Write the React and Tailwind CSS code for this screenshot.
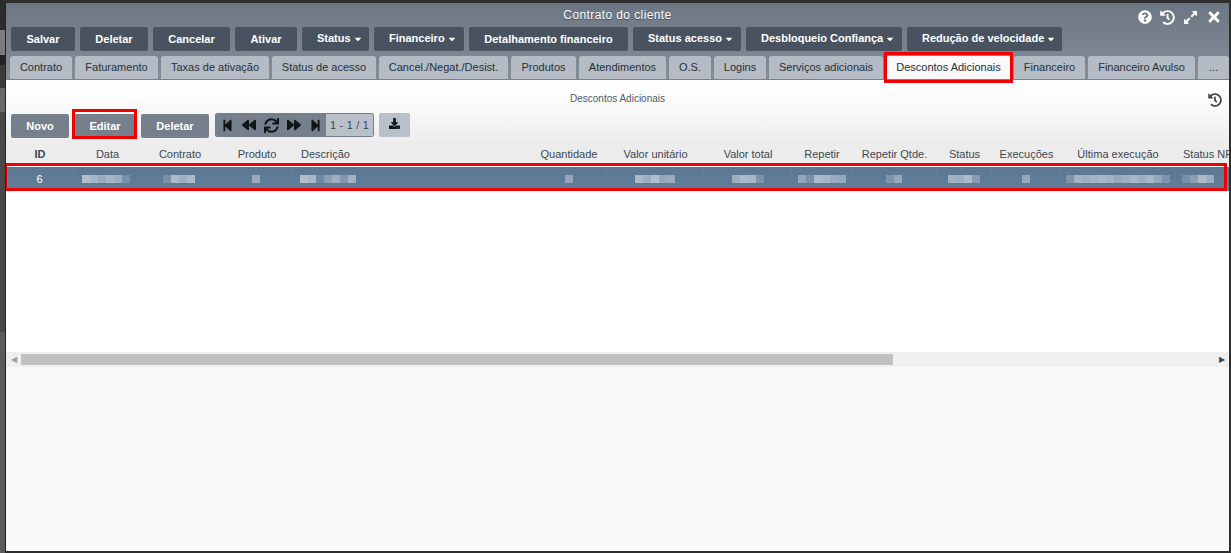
import { FaQuestionCircle, FaHistory, FaExpandAlt, FaTimes, FaStepBackward, FaBackward, FaSync, FaForward, FaStepForward, FaDownload, FaCaretDown } from 'react-icons/fa';

const actions = [
  { label: 'Salvar', w: 'w-[64px]' },
  { label: 'Deletar', w: 'w-[68px]' },
  { label: 'Cancelar', w: 'w-[77px]' },
  { label: 'Ativar', w: 'w-[62px]' },
  { label: 'Status', w: 'w-[67px]', menu: true },
  { label: 'Financeiro', w: 'w-[90px]', menu: true },
  { label: 'Detalhamento financeiro', w: 'w-[159px]' },
  { label: 'Status acesso', w: 'w-[108px]', menu: true },
  { label: 'Desbloqueio Confiança', w: 'w-[156px]', menu: true },
  { label: 'Redução de velocidade', w: 'w-[155px]', menu: true },
];

const tabs = [
  { label: 'Contrato', w: 'w-[62px]' },
  { label: 'Faturamento', w: 'w-[83px]' },
  { label: 'Taxas de ativação', w: 'w-[108px]' },
  { label: 'Status de acesso', w: 'w-[104px]' },
  { label: 'Cancel./Negat./Desist.', w: 'w-[129px]' },
  { label: 'Produtos', w: 'w-[65px]' },
  { label: 'Atendimentos', w: 'w-[87px]' },
  { label: 'O.S.', w: 'w-[42px]' },
  { label: 'Logins', w: 'w-[52px]' },
  { label: 'Serviços adicionais', w: 'w-[114px]' },
  { label: 'Descontos Adicionais', w: 'w-[125px]', active: true },
  { label: 'Financeiro', w: 'w-[71px]' },
  { label: 'Financeiro Avulso', w: 'w-[107px]' },
  { label: '...', w: 'w-[31px]' },
];

// blurred cells of the selected row, one value per 8px block
const columns = [
  { label: 'ID', w: 'w-[68px]', bold: true, text: '6' },
  { label: 'Data', w: 'w-[65px]', nudge: true, blur: [0.9, 0.8, 0.65, 0.8, 0.7, 0.3] },
  { label: 'Contrato', w: 'w-[80px]', nudge: true, blur: [0.3, 0.85, 0.7, 0.85] },
  { label: 'Produto', w: 'w-[74px]', nudge: true, blur: [0.65] },
  { label: 'Descrição', w: 'w-[238px]', left: true, blur: [0.9, 0.8, 0.2, 0.5, 0.7, 0.4, 0.75] },
  { label: 'Quantidade', w: 'w-[76px]', blur: [0.6] },
  { label: 'Valor unitário', w: 'w-[97px]', blur: [0.85, 0.7, 0.9, 0.6, 0.65] },
  { label: 'Valor total', w: 'w-[88px]', blur: [0.7, 0.85, 0.8, 0.35] },
  { label: 'Repetir', w: 'w-[60px]', blur: [0.6, 0.3, 0.85, 0.8, 0.65, 0.6] },
  { label: 'Repetir Qtde.', w: 'w-[85px]', blur: [0.35, 0.6] },
  { label: 'Status', w: 'w-[55px]', blur: [0.75, 0.7, 0.85, 0.45] },
  { label: 'Execuções', w: 'w-[69px]', blur: [0.6] },
  { label: 'Última execução', w: 'w-[114px]', blur: [0.35, 0.75, 0.7, 0.75, 0.8, 0.75, 0.6, 0.7, 0.8, 0.7, 0.8, 0.6, 0.35] },
  { label: 'Status NFE', w: 'w-[65px]', left: true, blur: [0.3, 0.5, 0.85, 0.7] },
];

// what shows of the page behind the window, on its left
const backdrop = [
  'h-[30px] bg-[#2c2c2c]',
  'h-[25px] bg-[#7c7c7c]',
  'h-[10px] bg-[#222222]',
  'h-[23px] bg-[#3a3a3a]',
  'h-[24px] bg-[#6a6a6a]',
  'h-[220px] bg-[#484848]',
  'h-[221px] bg-[#5c5c5c]',
];

function Blur({ cells }) {
  return (
    <div className="flex h-[8px]">
      {cells.map((o, i) => (
        <span key={i} className="w-[8px] h-full bg-[#b9c5d4]" style={{ opacity: o }} />
      ))}
    </div>
  );
}

function SubButton({ children, w }) {
  return (
    <button className={`${w} h-[24px] rounded-[2px] bg-[#75808c] text-white text-[11px] font-bold flex items-center justify-center`}>
      {children}
    </button>
  );
}

export default function App() {
  return (
    <div className="w-[1231px] h-[553px] overflow-hidden bg-[#2e2e2e] flex font-['Liberation_Sans',Arial,sans-serif]">
      <div className="w-[5px] shrink-0 flex flex-col">
        {backdrop.map(b => <div key={b} className={b} />)}
      </div>
      <div className="w-[1224px] h-[548px] mt-[3px] shrink-0 border-l border-[#222222] flex flex-col bg-[#f9f9f9]">
        {/* title + actions + tabs */}
        <div className="h-[77px] shrink-0 bg-gradient-to-b from-[#6c7783] to-[#838e99] flex flex-col">
          <div className="relative h-[24px] shrink-0 flex items-center justify-center text-white text-[12px] tracking-[0.4px] [text-shadow:0_1px_1px_rgba(0,0,0,0.4)]">
            Contrato do cliente
            <div className="absolute right-[7px] top-[6px] flex items-center gap-[8px] text-white">
              <FaQuestionCircle size={14} />
              <FaHistory size={15} />
              <FaExpandAlt size={15} />
              <FaTimes size={16} />
            </div>
          </div>
          <div className="flex gap-[5px] pl-[5px] h-[24px] shrink-0">
            {actions.map(a => (
              <button key={a.label} className={`${a.w} h-full rounded-[2px] bg-[#48535f] text-white text-[11px] font-bold flex items-center ${a.menu ? 'pl-[15px] gap-[2px]' : 'justify-center'}`}>
                <span className={a.menu ? '-mt-[2px]' : ''}>{a.label}</span>
                {a.menu && <FaCaretDown size={10} className="-mt-[1px]" />}
              </button>
            ))}
          </div>
          <div className="flex gap-[3px] pl-[4px] mt-[5px] h-[24px] shrink-0 border-b border-[#76818d]">
            {tabs.map(t => (
              <div key={t.label} className={`relative ${t.w} h-[23px] rounded-t-[3px] flex items-center justify-center text-[11px] text-[#27313b] ${t.active ? 'bg-[#f9f9f9]' : 'bg-[#b4bbc4]'}`}>
                {t.label}
                {t.active && <span className="absolute -left-[2px] -right-[2px] -top-[4px] -bottom-[4px] border-[3px] border-[#f00000]" />}
              </div>
            ))}
          </div>
        </div>

        {/* panel */}
        <div className="h-[287px] shrink-0 bg-white flex flex-col overflow-hidden">
          <div className="h-[65px] shrink-0 bg-gradient-to-b from-white via-[#f8f8f8] to-[#ececec] flex flex-col">
            <div className="relative h-[34px] shrink-0 flex items-center justify-center text-[10px] text-[#4f5b68]">
              <span className="mt-[3px]">Descontos Adicionais</span>
              <FaHistory size={14} className="absolute right-[7px] top-[13px] text-[#444]" />
            </div>
            <div className="flex items-start pl-[5px] h-[24px]">
              <SubButton w="w-[58px]">Novo</SubButton>
              <div className="relative ml-[5px]">
                <SubButton w="w-[62px]">Editar</SubButton>
                <span className="absolute -left-[2px] -right-[1px] -top-[5px] -bottom-[1px] border-[3px] border-[#f00000]" />
              </div>
              <div className="ml-[5px]"><SubButton w="w-[68px]">Deletar</SubButton></div>
              <div className="ml-[6px] -mt-[1px] h-[24px] w-[159px] rounded-[2px] border border-[#75808c] flex overflow-hidden">
                <div className="w-[110px] bg-[#75808c] flex items-center justify-center gap-[8px] text-[#101418]">
                  <FaStepBackward size={13} />
                  <FaBackward size={14} />
                  <FaSync size={15} />
                  <FaForward size={14} />
                  <FaStepForward size={13} />
                </div>
                <div className="flex-1 bg-[#b9c0c9] flex items-center justify-center text-[11px] tracking-[0.2px] text-[#3d4752]">1 - 1 / 1</div>
              </div>
              <button className="ml-[5px] -mt-[1px] w-[31px] h-[24px] rounded-[2px] bg-[#b9c0c9] flex items-center justify-center text-[#101418]">
                <FaDownload size={11} className="-mt-[3px]" />
              </button>
            </div>
          </div>

          <div className="flex h-[19px] shrink-0 bg-[#ececec] w-[1245px]">
            {columns.map(c => (
              <div key={c.label} className={`${c.w} shrink-0 flex items-center whitespace-nowrap text-[11px] text-[#3d4752] ${c.left ? 'pl-[8px]' : 'justify-center'} ${c.nudge ? 'pl-[2px]' : ''} ${c.bold ? 'font-bold' : ''}`}>
                {c.label}
              </div>
            ))}
          </div>

          <div className="relative h-[24px] shrink-0 mt-[3px] bg-gradient-to-b from-[#5c7792] to-[#627d99] flex">
            <div className="flex w-[1245px] shrink-0">
              {columns.map(c => (
                <div key={c.label} className={`${c.w} shrink-0 flex items-center border-r border-[#637e9a] ${c.left ? 'pl-[7px]' : 'justify-center'} text-white text-[11px]`}>
                  {c.text ? c.text : <Blur cells={c.blur} />}
                </div>
              ))}
            </div>
            <span className="absolute -left-[2px] right-[2px] -top-[4px] bottom-0 border-[3px] border-[#f00000]" />
          </div>

          <div className="flex-1" />

          {/* horizontal scrollbar */}
          <div className="h-[15px] shrink-0 bg-[#f0f0f0] flex items-center">
            <div className="w-[15px] flex justify-center text-[#9a9a9a] text-[8px]">◀</div>
            <div className="w-[872px] h-[11px] bg-[#c1c1c1]" />
            <div className="flex-1" />
            <div className="w-[15px] flex justify-center text-[#4a4a4a] text-[8px]">▶</div>
          </div>
        </div>

        <div className="flex-1 bg-[#f9f9f9]" />
      </div>
    </div>
  );
}
